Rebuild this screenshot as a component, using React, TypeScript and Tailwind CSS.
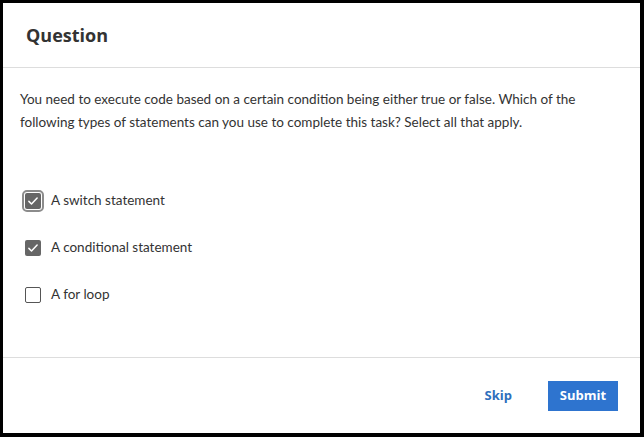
import { useState } from 'react';

const options = [
  { id: 'switch', label: 'A switch statement', checked: true, focused: true },
  { id: 'conditional', label: 'A conditional statement', checked: true, focused: false },
  { id: 'for', label: 'A for loop', checked: false, focused: false },
];

const CheckBox = ({ checked, focused }: { checked: boolean; focused: boolean }) => (
  <span
    className={`flex h-4 w-4 shrink-0 items-center justify-center rounded-[2px] ${
      checked ? 'bg-[#666666]' : 'border-[1.5px] border-[#555555] bg-white'
    } ${focused ? 'outline-2 outline-offset-[1px] outline-[#8c8c8c]' : ''}`}
  >
    {checked && (
      <svg viewBox="0 0 16 16" className="h-3 w-3" fill="none">
        <path d="M2.5 8.5l3.5 3.5 7.5-8" stroke="white" strokeWidth="2" strokeLinecap="round" strokeLinejoin="round" />
      </svg>
    )}
  </span>
);

export default function App() {
  const [state, setState] = useState(options);

  const toggle = (id: string) =>
    setState((prev) => prev.map((o) => (o.id === id ? { ...o, checked: !o.checked } : o)));

  return (
    <div className="h-[437px] w-[644px] bg-black pb-[4px] pl-[3px] pr-[4px] pt-[3px]">
      <div className="flex h-full flex-col bg-white text-[#333333]" style={{ fontFamily: 'Lato, "Open Sans", sans-serif' }}>
        {/* header */}
        <div className="flex h-[65px] shrink-0 items-center border-b border-[#dddddd] pl-[23px]">
          <h2 className="text-[18px] font-bold text-[#333333]" style={{ fontFamily: '"Open Sans", sans-serif' }}>
            Question
          </h2>
        </div>

        {/* body */}
        <div className="flex-1 pl-[17px] pr-[20px] pt-[20px]">
          <p className="text-[13.5px] leading-[23px]">
            You need to execute code based on a certain condition being either true or false. Which of the following
            types of statements can you use to complete this task? Select all that apply.
          </p>
          <div className="mt-[43px] flex flex-col">
            {state.map((o) => (
              <label
                key={o.id}
                onClick={() => toggle(o.id)}
                className="flex h-[47px] cursor-pointer items-center gap-[10px] pl-[5px] text-[13.5px]"
              >
                <CheckBox checked={o.checked} focused={o.focused} />
                <span>{o.label}</span>
              </label>
            ))}
          </div>
        </div>

        {/* footer */}
        <div className="flex h-[76px] shrink-0 items-center justify-end border-t border-[#dddddd] pr-[22px]">
          <button
            className="mr-[36px] text-[13px] font-bold text-[#2f6fbd]"
            style={{ fontFamily: '"Open Sans", sans-serif' }}
          >
            Skip
          </button>
          <button
            className="h-[30px] w-[70px] bg-[#2e74cf] text-[13px] font-bold text-white"
            style={{ fontFamily: '"Open Sans", sans-serif' }}
          >
            Submit
          </button>
        </div>
      </div>
    </div>
  );
}
